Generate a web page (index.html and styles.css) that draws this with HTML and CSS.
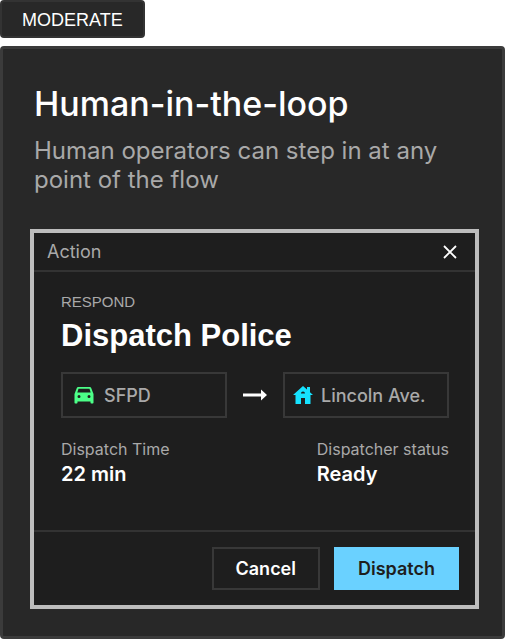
FILE: index.html
```
<!DOCTYPE html>
<html lang="en">
<head>
<meta charset="utf-8">
<meta name="viewport" content="width=device-width, initial-scale=1">
<title>Human-in-the-loop</title>
<link rel="stylesheet" href="styles.css">
</head>
<body>
<main class="page">
  <span class="tag">MODERATE</span>
  <section class="card">
    <h1 class="card-title">Human-in-the-loop</h1>
    <p class="card-text">Human operators can step in at any point of the flow</p>
    <div class="dialog" role="dialog" aria-labelledby="dialog-title">
      <header class="dialog-header">
        <span>Action</span>
        <button class="close" type="button" aria-label="Close">
          <svg width="14" height="14" viewBox="0 0 14 14" fill="none" stroke="currentColor" stroke-width="1.8"><path d="M1 1l12 12M13 1L1 13"/></svg>
        </button>
      </header>
      <div class="dialog-body">
        <p class="eyebrow">RESPOND</p>
        <h2 class="dialog-title" id="dialog-title">Dispatch Police</h2>
        <div class="route">
          <div class="place place-from">
            <svg class="car" width="20" height="18" viewBox="0 0 20 18" fill="currentColor" fill-rule="evenodd"><path d="M4.200 1h11.600c.7 0 1.200.4 1.400 1L19.500 8v8.500c0 .6-.4 1-1 1h-1c-.6 0-1-.4-1-1V15.500h-13v1c0 .6-.4 1-1 1h-1c-.6 0-1-.4-1-1V8L2.800 2c.2-.6.7-1 1.400-1zM4.500 2.800L3.300 6.500h13.400l-1.200-3.700zM5 9a1.500 1.500 0 1 0 0 3 1.500 1.500 0 0 0 0-3zm10 0a1.500 1.500 0 1 0 0 3 1.500 1.500 0 0 0 0-3z"/></svg>
            <span>SFPD</span>
          </div>
          <svg class="arrow" width="24" height="12" viewBox="0 0 24 12" fill="currentColor"><path d="M0 4.600h18V0.500L24 6l-6 5.500V7.400H0z"/></svg>
          <div class="place place-to">
            <svg class="house" width="20" height="18" viewBox="0 0 20 18" fill="currentColor" fill-rule="evenodd"><path d="M10 0l4 3.500V1h3v5.200L20 9h-2.500v9H12v-6H8v6H2.500V9H0zM8 7.500h4c0-1.200-.9-2-2-2s-2 .8-2 2z"/></svg>
            <span>Lincoln Ave.</span>
          </div>
        </div>
        <dl class="facts">
          <div><dt>Dispatch Time</dt><dd>22 min</dd></div>
          <div><dt>Dispatcher status</dt><dd>Ready</dd></div>
        </dl>
      </div>
      <footer class="dialog-footer">
        <button class="btn btn-outline" type="button">Cancel</button>
        <button class="btn btn-primary" type="button">Dispatch</button>
      </footer>
    </div>
  </section>
</main>
</body>
</html>
```
FILE: styles.css
```
* { box-sizing: border-box; margin: 0; padding: 0; }
body { background: #fff; font-family: Inter, "Liberation Sans", sans-serif; color: #fff; }
svg { display: block; flex: none; }
button { font: inherit; color: inherit; background: none; border: 0; cursor: pointer; }

.page { display: flex; flex-direction: column; align-items: flex-start; gap: 8px; min-height: 100vh; }
.tag, .eyebrow, .dialog-title { font-family: "Liberation Sans", Arial, sans-serif; }
.tag { padding: 9px 20px 7px; border: 2px solid #333; border-radius: 4px; background: #282828; font-size: 18px; line-height: 18px; }

.card { align-self: stretch; flex: 1; padding: 33px 23px 27px 27px; border: 3px solid #3b3b3b; border-radius: 4px; background: #282828; }
.card-title { padding-left: 4px; font-size: 34px; font-weight: 500; line-height: 44px; }
.card-text { margin: 10px 0 35px; padding-left: 4px; color: #a9a9a9; font-size: 24px; line-height: 29px; }

.dialog { border: 4px solid #bdbdbd; background: #1e1e1e; }
.dialog-header { display: flex; align-items: center; justify-content: space-between; height: 39px; padding: 0 18px 0 13px; border-bottom: 2px solid #333; color: #a9a9a9; font-size: 18px; }
.close { color: #fff; }
.dialog-body { padding: 20px 26px 42px 27px; }
.eyebrow { color: #a9a9a9; font-size: 15px; line-height: 20px; }
.dialog-title { font-size: 31px; font-weight: 700; line-height: 36px; margin-top: 6px; }

.route { display: flex; align-items: center; gap: 16px; margin-top: 18px; }
.place { flex: 1; display: flex; align-items: center; height: 46px; border: 2px solid #383838; color: #a9a9a9; font-size: 18px; font-weight: 500; white-space: nowrap; }
.place-from { gap: 10px; padding: 0 8px 0 11px; }
.place-to { gap: 8px; padding: 0 11px 0 8px; }
.car { color: #4cff88; }
.house { color: #16e2ff; }

.facts { display: flex; justify-content: space-between; margin-top: 20px; }
.facts dt { color: #a9a9a9; font-size: 16px; line-height: 22px; }
.facts dd { font-size: 20px; font-weight: 600; line-height: 28px; }

.dialog-footer { display: flex; justify-content: flex-end; gap: 14px; padding: 15px 16px; border-top: 2px solid #333; }
.btn { height: 43px; padding: 0 22px; font-size: 18px; font-weight: 600; border: 2px solid transparent; }
.btn-outline { border-color: #383838; }
.btn-primary { background: #6ad1ff; border-color: #6ad1ff; color: #1e1e1e; }
```
